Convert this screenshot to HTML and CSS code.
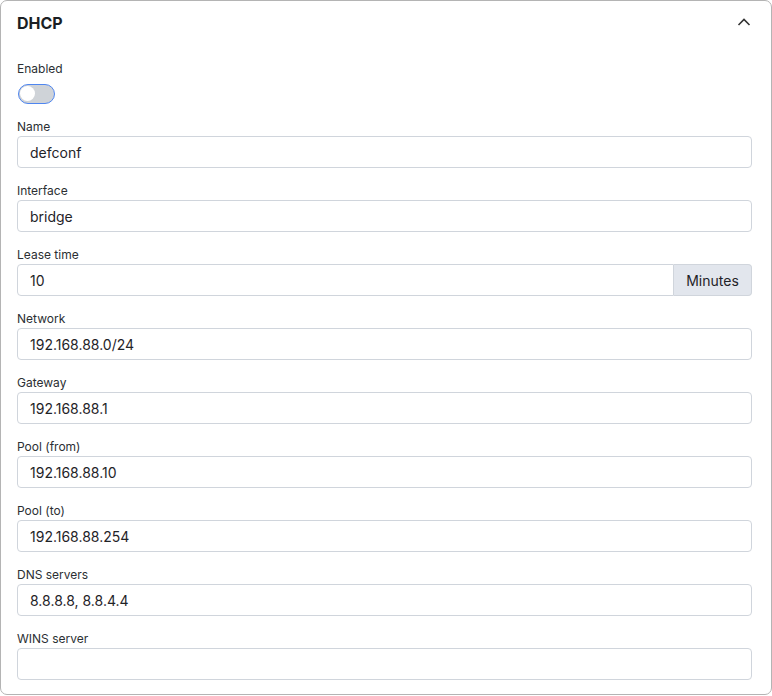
FILE: index.html
```html
<!DOCTYPE html>
<html>
<head>
<meta charset="utf-8">
<link rel="stylesheet" href="styles.css">
</head>
<body>
<div class="card">
  <div class="header">
    <h2 class="title">DHCP</h2>
    <svg class="chev" width="14" height="10" viewBox="0 0 14 10"><path d="M1.5 8 L7 2.5 L12.5 8" fill="none" stroke="#333" stroke-width="1.6"/></svg>
  </div>
  <div class="field">
    <label class="label">Enabled</label>
    <div class="toggle-row"><span class="toggle"><span class="knob"></span></span></div>
  </div>
  <div class="field">
    <label class="label">Name</label>
    <div class="input">defconf</div>
  </div>
  <div class="field">
    <label class="label">Interface</label>
    <div class="input">bridge</div>
  </div>
  <div class="field">
    <label class="label">Lease time</label>
    <div class="group">
      <div class="input grouped">10</div>
      <div class="addon">Minutes</div>
    </div>
  </div>
  <div class="field">
    <label class="label">Network</label>
    <div class="input">192.168.88.0/24</div>
  </div>
  <div class="field">
    <label class="label">Gateway</label>
    <div class="input">192.168.88.1</div>
  </div>
  <div class="field">
    <label class="label">Pool (from)</label>
    <div class="input">192.168.88.10</div>
  </div>
  <div class="field">
    <label class="label">Pool (to)</label>
    <div class="input">192.168.88.254</div>
  </div>
  <div class="field">
    <label class="label">DNS servers</label>
    <div class="input">8.8.8.8, 8.8.4.4</div>
  </div>
  <div class="field last">
    <label class="label">WINS server</label>
    <div class="input"></div>
  </div>
</div>
</body>
</html>
```
FILE: styles.css
```css
* { box-sizing: border-box; }
html, body { margin: 0; padding: 0; background: #fff; }
body { font-family: Inter, "Noto Sans", sans-serif; color: #1f2328; }
.card {
  width: 772px;
  height: 695px;
  border: 1px solid #b4b4b4;
  border-radius: 7px;
  padding: 11px 19px 0 16px;
}
.header {
  display: flex;
  align-items: center;
  justify-content: space-between;
  height: 22px;
  margin-bottom: 27px;
}
.title { margin: 0; font-size: 16px; font-weight: 700; line-height: 22px; color: #1b1f24; }
.chev { margin-right: 1px; margin-top: -2px; }
.field { display: flex; flex-direction: column; margin-bottom: 15px; }
.label { font-size: 12px; line-height: 16px; color: #2b2f33; margin-bottom: 1px; }
.toggle-row { padding-top: 6px; height: 26px; }
.toggle {
  display: block;
  width: 37px;
  height: 20px;
  margin-left: 1px;
  border: 1.5px solid #4f86f0;
  border-radius: 10px;
  background: #cfd3d8;
  position: relative;
}
.knob {
  position: absolute;
  left: 1px;
  top: 1px;
  width: 15px;
  height: 15px;
  border-radius: 50%;
  background: #fff;
}
.input {
  height: 32px;
  border: 1px solid #d0d5dc;
  border-radius: 4px;
  padding: 1px 12px 0;
  font-size: 14px;
  line-height: 30px;
  color: #1f2328;
  background: #fff;
}
.group { display: flex; }
.grouped { flex: 1; border-radius: 4px 0 0 4px; }
.addon {
  width: 78px;
  height: 32px;
  border: 1px solid #d0d5dc;
  border-left: none;
  border-radius: 0 4px 4px 0;
  background: #e2e6ed;
  font-size: 14px;
  padding-top: 1px;
  line-height: 30px;
  text-align: center;
  color: #1f2328;
}
```
